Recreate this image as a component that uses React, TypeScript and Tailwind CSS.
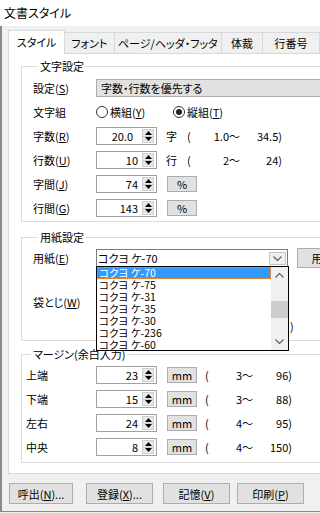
import React from "react";

const Up = () => (
  <svg width="7" height="4" viewBox="0 0 7 4">
    <path d="M0 4 L3.5 0 L7 4 Z" fill="#000" />
  </svg>
);
const Down = () => (
  <svg width="7" height="4" viewBox="0 0 7 4">
    <path d="M0 0 L3.5 4 L7 0 Z" fill="#000" />
  </svg>
);
const Chev = ({ up }: { up?: boolean }) => (
  <svg width="9" height="5" viewBox="0 0 9 5">
    <path d={up ? "M0.5 4.5 L4.5 0.5 L8.5 4.5" : "M0.5 0.5 L4.5 4.5 L8.5 0.5"} fill="none" stroke="#606060" strokeWidth="1.2" />
  </svg>
);

const Key = ({ label, k }: { label: string; k: string }) => (
  <span>
    {label}(<u>{k}</u>)
  </span>
);

const Spin = ({ v, pad = 4 }: { v: string; pad?: number }) => (
  <div className="flex h-[18px] w-[61px] items-center border border-[#a0a0a0] bg-white">
    <span className={`flex-1 text-right leading-[16px] ${pad === 4 ? "pr-[4px]" : "pr-[9px]"}`}>{v}</span>
    <div className="mr-[2px] flex h-[14px] w-[12px] flex-col border border-[#cfcfcf] bg-[#e8e8e8]">
      <div className="flex flex-1 items-center justify-center border-b border-[#cfcfcf]">
        <Up />
      </div>
      <div className="flex flex-1 items-center justify-center">
        <Down />
      </div>
    </div>
  </div>
);

const SmallBtn = ({ t }: { t: string }) => (
  <div className="ml-[10px] flex h-[16px] w-[30px] items-center justify-center border border-[#adadad] bg-[#e1e1e1] leading-[14px]">
    {t}
  </div>
);

const Radio = ({ on }: { on?: boolean }) => (
  <span className="flex h-[12px] w-[12px] items-center justify-center rounded-full border border-[#333] bg-white">
    {on && <span className="h-[6px] w-[6px] rounded-full bg-[#222]" />}
  </span>
);

const Row = ({ label, children, lw = "w-[63px]" }: { label: React.ReactNode; children?: React.ReactNode; lw?: string }) => (
  <div className="flex h-[24px] items-center">
    <span className={`${lw} shrink-0`}>{label}</span>
    {children}
  </div>
);

const Range = ({ unit, a, b }: { unit: string; a: string; b: string }) => (
  <div className="ml-[9px] flex items-center">
    <span className="w-[21px]">{unit}</span>
    <span className="flex w-[53px] justify-between">
      <span>(</span>
      <span>{a}</span>
    </span>
    <span className="w-[42px] text-right">{b}</span>
  </div>
);

const MRange = ({ a, b }: { a: string; b: string }) => (
  <div className="ml-[8px] flex items-center">
    <span className="flex w-[48px] justify-between">
      <span>(</span>
      <span>{a}</span>
    </span>
    <span className="w-[39px] text-right">{b}</span>
  </div>
);

const papers = ["コクヨ ケ-70", "コクヨ ケ-75", "コクヨ ケ-31", "コクヨ ケ-35", "コクヨ ケ-30", "コクヨ ケ-236", "コクヨ ケ-60"];

export default function App() {
  return (
    <div className="flex h-[513px] w-[320px] flex-col overflow-hidden bg-[#f0f0f0] font-['Noto_Sans_CJK_JP',sans-serif] text-[11px] leading-[12px] text-black [font-feature-settings:'palt']">
      <div className="flex h-[26px] shrink-0 items-center bg-white pl-[4px] text-[12px]">文書スタイル</div>

      <div className="flex h-[486px] shrink-0 flex-col border-b border-l-2 border-[#8a8a8a]">
        {/* tabs */}
        <div className="mt-[4px] flex h-[23px] items-end pl-[6px]">
          <div className="relative z-10 -mb-px flex h-[24px] w-[60px] items-center justify-center border-x border-t border-[#d9d9d9] bg-white pb-[2px]">
            スタイル
          </div>
          <div className="flex h-[21px] w-[52px] items-center justify-center border-r border-t border-[#d9d9d9]">フォント</div>
          <div className="flex h-[21px] w-[113px] items-center justify-center border-r border-t border-[#d9d9d9]">ページ/ヘッダ・フッタ</div>
          <div className="flex h-[21px] w-[43px] items-center justify-center border-r border-t border-[#d9d9d9]">体裁</div>
          <div className="flex h-[21px] w-[60px] items-center justify-center border-r border-t border-[#d9d9d9]">行番号</div>
        </div>

        {/* panel */}
        <div className="ml-[6px] w-[360px] border border-[#d9d9d9] bg-white pb-[10px] pt-[6px]">
          <fieldset className="ml-[12px] border border-[#dcdcdc] pb-[1px] pl-[11px] pt-[4px]">
            <legend className="ml-[5px] px-[2px] leading-[12px]">文字設定</legend>
            <Row label={<Key label="設定" k="S" />}>
              <div className="flex h-[18px] flex-1 items-center border border-[#adadad] bg-[#e1e1e1] pl-[4px]">字数・行数を優先する</div>
            </Row>
            <Row label="文字組">
              <div className="flex w-[77px] items-center gap-[2px]">
                <Radio />
                <Key label="横組" k="Y" />
              </div>
              <div className="flex items-center gap-[2px]">
                <Radio on />
                <Key label="縦組" k="T" />
              </div>
            </Row>
            <Row label={<Key label="字数" k="R" />}>
              <Spin v="20.0" pad={9} />
              <Range unit="字" a="1.0～" b="34.5)" />
            </Row>
            <Row label={<Key label="行数" k="U" />}>
              <Spin v="10" />
              <Range unit="行" a="2～" b="24)" />
            </Row>
            <Row label={<Key label="字間" k="J" />}>
              <Spin v="74" />
              <SmallBtn t="%" />
            </Row>
            <Row label={<Key label="行間" k="G" />}>
              <Spin v="143" />
              <SmallBtn t="%" />
            </Row>
          </fieldset>

          <fieldset className="ml-[12px] mt-[9px] border border-[#dcdcdc] pb-[2px] pl-[11px] pt-[3px]">
            <legend className="ml-[5px] px-[2px] leading-[12px]">用紙設定</legend>
            <Row label={<Key label="用紙" k="E" />}>
              <div className="relative flex h-[18px] w-[192px] items-center border border-[#7a7a7a] bg-white pl-[1px]">
                <span className="flex-1">コクヨ ケ-70</span>
                <div className="mr-px flex h-[13px] w-[17px] items-center justify-center border border-[#c4c4c4] bg-[#f0f0f0]">
                  <Chev />
                </div>
                {/* open dropdown list */}
                <div className="absolute left-[-1px] top-full z-20 flex h-[85px] w-[193px] border border-black bg-white">
                  <div className="flex flex-1 flex-col overflow-hidden">
                    {papers.map((p, i) => (
                      <div
                        key={p}
                        className={
                          i === 0
                            ? "h-[12px] shrink-0 border border-dotted border-[#f09a3e] bg-[#3399ff] pl-px text-[10.5px] leading-[10px] text-white"
                            : "h-[12px] shrink-0 pl-[2px] text-[10.5px] leading-[12px]"
                        }
                      >
                        {p}
                      </div>
                    ))}
                  </div>
                  <div className="flex w-[17px] flex-col bg-[#f0f0f0]">
                    <div className="flex h-[17px] items-center justify-center">
                      <Chev up />
                    </div>
                    <div className="h-[17px]" />
                    <div className="h-[17px] bg-[#cdcdcd]" />
                    <div className="flex-1" />
                    <div className="flex h-[17px] items-center justify-center">
                      <Chev />
                    </div>
                  </div>
                </div>
              </div>
              <div className="ml-[9px] flex h-[20px] w-[40px] items-center justify-center border border-[#adadad] bg-[#e1e1e1]">用</div>
            </Row>
            <div className="mt-[20px]">
              <Row label={<Key label="袋とじ" k="W" />} />
            </div>
            <div className="flex h-[24px] items-center pl-[257px]">)</div>
          </fieldset>

          <fieldset className="ml-[12px] mt-[7px] border border-[#dcdcdc] pb-[3px] pl-[4px] pt-[3px]">
            <legend className="ml-[5px] px-[2px] leading-[12px]">マージン(余白入力)</legend>
            <Row label="上端" lw="w-[70px]">
              <Spin v="23" />
              <SmallBtn t="mm" />
              <MRange a="3～" b="96)" />
            </Row>
            <Row label="下端" lw="w-[70px]">
              <Spin v="15" />
              <SmallBtn t="mm" />
              <MRange a="3～" b="88)" />
            </Row>
            <Row label="左右" lw="w-[70px]">
              <Spin v="24" />
              <SmallBtn t="mm" />
              <MRange a="4～" b="95)" />
            </Row>
            <Row label="中央" lw="w-[70px]">
              <Spin v="8" />
              <SmallBtn t="mm" />
              <MRange a="4～" b="150)" />
            </Row>
          </fieldset>
        </div>

        {/* buttons */}
        <div className="mt-[9px] flex pl-[7px]">
          <div className="flex h-[21px] w-[64px] items-center justify-center border border-[#adadad] bg-[#e1e1e1]">
            <Key label="呼出" k="N" />...
          </div>
          <div className="ml-[13px] flex h-[21px] w-[67px] items-center justify-center border border-[#adadad] bg-[#e1e1e1]">
            <Key label="登録" k="X" />...
          </div>
          <div className="ml-[10px] flex h-[21px] w-[67px] items-center justify-center border border-[#adadad] bg-[#e1e1e1]">
            <Key label="記憶" k="V" />
          </div>
          <div className="ml-[7px] flex h-[21px] w-[67px] items-center justify-center border border-[#adadad] bg-[#e1e1e1]">
            <Key label="印刷" k="P" />
          </div>
        </div>
      </div>
    </div>
  );
}
